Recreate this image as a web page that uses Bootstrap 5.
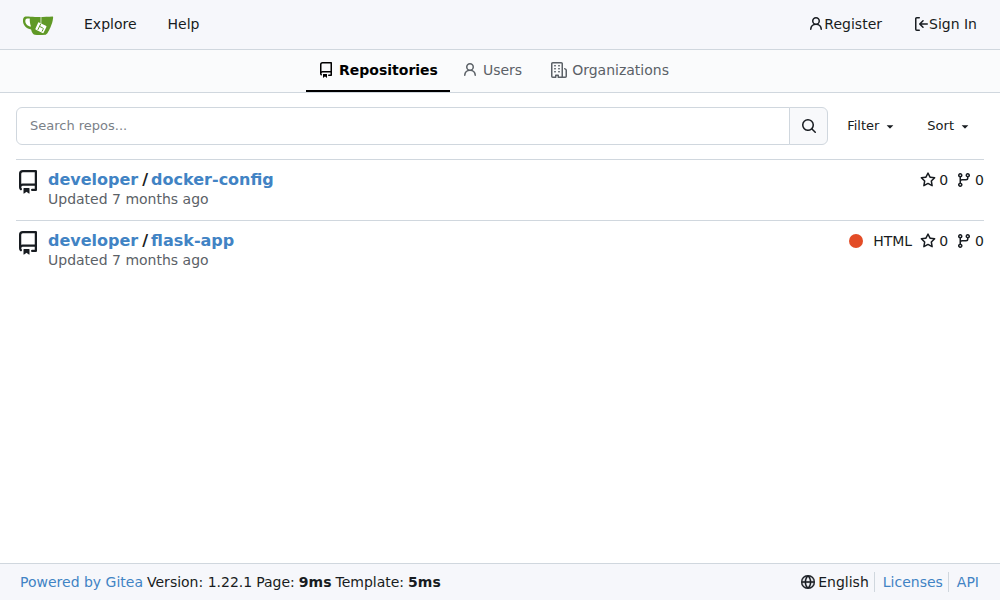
<!DOCTYPE html>
<html lang="en">
<head>
<meta charset="utf-8">
<meta name="viewport" content="width=device-width, initial-scale=1">
<title>Explore - Gitea</title>
<link rel="stylesheet" href="https://cdn.jsdelivr.net/npm/bootstrap@5.3.0/dist/css/bootstrap.min.css">
<style>
:root { --ink: #181c21; --muted: #5b6167; --line: #d0d7de; --link: #4183c4; --bar: #f6f7fb; }
body { font-family: "DejaVu Sans", sans-serif; font-size: 14px; line-height: 20px; color: var(--ink); background: #fff; }
svg { fill: currentColor; flex: none; display: block; }
a { color: var(--link); text-decoration: none; }
.topbar { background: var(--bar); border-bottom: 1px solid var(--line); padding: 0 8px 1px 7px; }
.topbar .nav-link { color: var(--ink); padding: 14px 15px 14px 16px; }
.brand-link { padding: 8px 14px 8px 15px; }
.subnav { background: #fafbfc; border-bottom: 1px solid var(--line); }
.subnav .nav-link { color: var(--muted); padding: 10px 12px; gap: 5px; border-bottom: 2px solid transparent; }
.subnav .nav-link.active { color: #000; font-weight: 700; border-color: #000; }
.subnav .nav-link:last-child { margin: 0 13px 0 5px; }
.content { padding: 14px 16px; }
.search-box .form-control, .search-box .btn { border-color: var(--line); font-size: 13px; line-height: 20px; padding: 8px 13px; box-shadow: none; }
.search-box .form-control::placeholder { color: #7b8188; }
.search-box .btn { background: #f8f9fb; color: var(--ink); padding: 8px 10px 8px 11px; }
.menu-btn { font-size: 13px; line-height: 20px; color: var(--ink); border: 0; padding: 8px 12px; gap: 4px; }
.search-row { gap: 7px; margin-bottom: 14px; }
.menus { gap: 6px; }
.repo-item { border-top: 1px solid var(--line); padding: 10px 0 11px; gap: 8px; }
.repo-head { height: 19px; }
.repo-title { font-size: 16px; line-height: 20px; font-weight: 700; }
.repo-title span { margin: 0 3px 0 4px; }
.updated { color: var(--muted); }
.stats { gap: 8px; }
.stat-link { color: var(--ink); gap: 3px; }
.lang-link { gap: 10px; }
.lang-dot { width: 14px; height: 14px; border-radius: 50%; background: #e34c26; }
.foot { background: var(--bar); border-top: 1px solid var(--line); padding: 8px 21px 8px 20px; }
.foot-info { column-gap: 4px; }
.foot-links > * + * { border-left: 1px solid var(--line); margin-left: 5px; padding-left: 8px; }
.lang-btn { color: var(--ink); gap: 3px; }
</style>
</head>
<body class="d-flex flex-column min-vh-100">
<svg width="0" height="0" class="position-absolute" aria-hidden="true">
  <symbol id="repo" viewBox="0 0 16 16"><path d="M2 2.5A2.5 2.5 0 0 1 4.5 0h8.750a.75.75 0 0 1 .75.75v12.5a.75.75 0 0 1-.75.75h-2.500a.75.75 0 0 1 0-1.500h1.750v-2h-8a1 1 0 0 0-.714 1.700.75.75 0 1 1-1.072 1.050A2.495 2.495 0 0 1 2 11.500Zm10.500-1h-8a1 1 0 0 0-1 1v6.708A2.486 2.486 0 0 1 4.500 9h8ZM5 12.250a.25.25 0 0 1 .25-.25h3.500a.25.25 0 0 1 .25.25v3.250a.25.25 0 0 1-.4.2l-1.450-1.087a.249.249 0 0 0-.3 0L5.400 15.700a.25.25 0 0 1-.4-.2Z"/></symbol>
  <symbol id="person" viewBox="0 0 16 16"><path d="M10.561 8.073a6 6 0 0 1 3.432 5.142.75.75 0 1 1-1.498.07 4.500 4.500 0 0 0-8.990 0 .75.75 0 0 1-1.498-.07 6 6 0 0 1 3.431-5.142 3.999 3.999 0 1 1 5.123 0ZM10.500 5a2.500 2.500 0 1 0-5 0 2.500 2.500 0 0 0 5 0Z"/></symbol>
  <symbol id="signin" viewBox="0 0 16 16"><path d="M2 2.750C2 1.784 2.784 1 3.750 1h2.500a.75.75 0 0 1 0 1.500h-2.500a.25.25 0 0 0-.25.25v10.500c0 .138.112.25.25.25h2.500a.75.75 0 0 1 0 1.500h-2.500A1.750 1.750 0 0 1 2 13.250Zm6.560 4.500h5.690a.75.75 0 0 1 0 1.500H8.560l1.970 1.970a.749.749 0 0 1-.326 1.275.749.749 0 0 1-.734-.215L6.220 8.530a.75.75 0 0 1 0-1.060l3.250-3.250a.749.749 0 0 1 1.275.326.749.749 0 0 1-.215.734Z"/></symbol>
  <symbol id="org" viewBox="0 0 16 16"><path d="M1.750 16A1.750 1.750 0 0 1 0 14.250V1.750C0 .784.784 0 1.750 0h8.500C11.216 0 12 .784 12 1.750v12.500c0 .085-.006.168-.018.25h2.268a.25.25 0 0 0 .25-.25V8.285a.25.25 0 0 0-.111-.208l-1.055-.703a.749.749 0 1 1 .832-1.248l1.055.703c.487.325.779.871.779 1.456v5.965A1.750 1.750 0 0 1 14.250 16h-3.500a.766.766 0 0 1-.197-.026c-.099.017-.2.026-.303.026h-3a.75.75 0 0 1-.75-.75V14h-1v1.250a.75.75 0 0 1-.75.75Zm-.25-1.750c0 .138.112.25.25.25H4v-1.250a.75.75 0 0 1 .75-.75h2.500a.75.75 0 0 1 .75.75v1.250h2.250a.25.25 0 0 0 .25-.25V1.750a.25.25 0 0 0-.25-.25h-8.500a.25.25 0 0 0-.25.25ZM3.750 6h.5a.75.75 0 0 1 0 1.500h-.5a.75.75 0 0 1 0-1.500ZM3 3.750A.75.75 0 0 1 3.750 3h.5a.75.75 0 0 1 0 1.500h-.5A.75.75 0 0 1 3 3.750Zm4 3A.75.75 0 0 1 7.750 6h.5a.75.75 0 0 1 0 1.500h-.5A.75.75 0 0 1 7 6.750ZM7.750 3h.5a.75.75 0 0 1 0 1.500h-.5a.75.75 0 0 1 0-1.500ZM3 9.750A.75.75 0 0 1 3.750 9h.5a.75.75 0 0 1 0 1.500h-.5A.75.75 0 0 1 3 9.750ZM7.750 9h.5a.75.75 0 0 1 0 1.500h-.5a.75.75 0 0 1 0-1.500Z"/></symbol>
  <symbol id="search" viewBox="0 0 16 16"><path d="M10.680 11.740a6 6 0 0 1-7.922-8.982 6 6 0 0 1 8.982 7.922l3.040 3.040a.749.749 0 0 1-.326 1.275.749.749 0 0 1-.734-.215ZM11.500 7a4.499 4.499 0 1 0-8.997 0A4.499 4.499 0 0 0 11.500 7Z"/></symbol>
  <symbol id="down" viewBox="0 0 16 16"><path d="m4.427 7.427 3.396 3.396a.25.25 0 0 0 .354 0l3.396-3.396A.25.25 0 0 0 11.396 7H4.604a.25.25 0 0 0-.177.427Z"/></symbol>
  <symbol id="star" viewBox="0 0 16 16"><path d="M8 .25a.75.75 0 0 1 .673.418l1.882 3.815 4.210.612a.75.75 0 0 1 .416 1.279l-3.046 2.970.719 4.192a.751.751 0 0 1-1.088.791L8 12.347l-3.766 1.980a.75.75 0 0 1-1.088-.79l.72-4.194L.818 6.374a.75.75 0 0 1 .416-1.280l4.210-.611L7.327.668A.75.75 0 0 1 8 .25Zm0 2.445L6.615 5.500a.75.75 0 0 1-.564.41l-3.097.45 2.240 2.184a.75.75 0 0 1 .216.664l-.528 3.084 2.769-1.456a.75.75 0 0 1 .698 0l2.770 1.456-.53-3.084a.75.75 0 0 1 .216-.664l2.240-2.183-3.096-.45a.75.75 0 0 1-.564-.41L8 2.694Z"/></symbol>
  <symbol id="branch" viewBox="0 0 16 16"><path d="M9.500 3.250a2.250 2.250 0 1 1 3 2.122V6A2.500 2.500 0 0 1 10 8.500H6a1 1 0 0 0-1 1v1.128a2.251 2.251 0 1 1-1.500 0V5.372a2.250 2.250 0 1 1 1.500 0v1.836A2.493 2.493 0 0 1 6 7h4a1 1 0 0 0 1-1v-.628A2.250 2.250 0 0 1 9.500 3.250Zm-6 0a.75.75 0 1 0 1.500 0 .75.75 0 0 0-1.500 0Zm8.250-.75a.75.75 0 1 0 0 1.500.75.75 0 0 0 0-1.500ZM4.250 12a.75.75 0 1 0 0 1.500.75.75 0 0 0 0-1.500Z"/></symbol>
  <symbol id="globe" viewBox="0 0 16 16"><path stroke="currentColor" stroke-width=".3" d="M8 0a8 8 0 1 1 0 16A8 8 0 0 1 8 0ZM5.780 8.750a9.640 9.640 0 0 0 1.363 4.177c.255.426.542.832.857 1.215.245-.296.551-.705.857-1.215A9.640 9.640 0 0 0 10.220 8.750Zm4.440-1.500a9.640 9.640 0 0 0-1.363-4.177c-.307-.51-.612-.919-.857-1.215a9.927 9.927 0 0 0-.857 1.215A9.640 9.640 0 0 0 5.780 7.250Zm-5.944 1.500H1.543a6.507 6.507 0 0 0 4.666 5.500c-.123-.181-.24-.365-.352-.552-.715-1.192-1.437-2.874-1.581-4.948Zm-2.733-1.500h2.733c.144-2.074.866-3.756 1.580-4.948.12-.197.237-.381.353-.552a6.507 6.507 0 0 0-4.666 5.500Zm10.181 1.500c-.144 2.074-.866 3.756-1.580 4.948-.12.197-.237.381-.353.552a6.507 6.507 0 0 0 4.666-5.500Zm2.733-1.500a6.507 6.507 0 0 0-4.666-5.500c.123.181.24.365.353.552.714 1.192 1.436 2.874 1.580 4.948Z"/></symbol>
</svg>

<nav class="topbar d-flex align-items-center justify-content-between" aria-label="Main">
  <div class="d-flex align-items-center">
    <a class="brand-link" href="#" aria-label="Home">
      <svg width="32" height="30" viewBox="0 -1 32 30">
        <path fill="#609926" d="M3.500 6.600C6 6.400 9 6.900 13 7c6 .1 12.500 0 17.500-.4.900-.1.600 1.200.5 2-.3 3.200-1.200 5.800-2.600 8.800-1.700 3.600-3.300 7.100-5.200 7.400-3.600.4-8 .4-10.500 0-1.700-.4-3-2.800-3.600-5.400C4.600 18.900 1.300 15.600 1 11.600.8 8.800 1.600 6.800 3.500 6.600Z"/>
        <path fill="#fff" d="M4.500 8.700c1.200-.3 2.200-.2 3.300-.1-.2 2.900.2 5.300 1.200 8-3.100-.3-5.600-2.600-5.700-5.400 0-1.200.3-2.200 1.200-2.500ZM17 12.400l6.900 3.300c.6.300.7.700.5 1.200l-2.700 5.700c-.3.500-.7.700-1.200.4l-6.600-3.200c-.5-.3-.7-.7-.4-1.200l2.500-5.700c.2-.5.500-.7 1-.5Z"/>
        <path fill="none" stroke="#fff" stroke-width=".7" d="m19 7-.1 7"/>
        <path fill="none" stroke="#609926" stroke-width="1" d="m18.800 13.700-3 6.200m1.700-3.500 3 1.400c.9.400 1 .7.600 1.500l-1.100 2.200"/>
      </svg>
    </a>
    <a class="nav-link" href="#">Explore</a>
    <a class="nav-link" href="#">Help</a>
  </div>
  <div class="d-flex align-items-center">
    <a class="nav-link d-flex align-items-center" href="#"><svg width="16" height="16"><use href="#person"/></svg>Register</a>
    <a class="nav-link d-flex align-items-center" href="#"><svg width="16" height="16"><use href="#signin"/></svg>Sign In</a>
  </div>
</nav>

<nav class="subnav d-flex justify-content-center" aria-label="Explore">
  <a class="nav-link active d-flex align-items-center" aria-current="page" href="#"><svg width="16" height="16"><use href="#repo"/></svg>Repositories</a>
  <a class="nav-link d-flex align-items-center" href="#"><svg width="16" height="16"><use href="#person"/></svg>Users</a>
  <a class="nav-link d-flex align-items-center" href="#"><svg width="16" height="16"><use href="#org"/></svg>Organizations</a>
</nav>

<main class="content flex-grow-1">
  <form class="search-row d-flex align-items-center">
    <div class="search-box input-group flex-grow-1 w-auto">
      <input type="search" class="form-control" placeholder="Search repos..." aria-label="Search repos...">
      <button type="button" class="btn" aria-label="Search"><svg width="16" height="16"><use href="#search"/></svg></button>
    </div>
    <div class="menus d-flex">
      <button type="button" class="btn menu-btn d-flex align-items-center">Filter <svg width="14" height="14"><use href="#down"/></svg></button>
      <button type="button" class="btn menu-btn d-flex align-items-center">Sort <svg width="14" height="14"><use href="#down"/></svg></button>
    </div>
  </form>

  <div class="repo-list">
    <article class="repo-item d-flex align-items-start">
      <svg width="24" height="24"><use href="#repo"/></svg>
      <div class="flex-grow-1">
        <div class="repo-head d-flex align-items-center justify-content-between">
          <div class="repo-title d-flex"><a href="#">developer</a><span>/</span><a href="#">docker-config</a></div>
          <div class="stats d-flex align-items-center">
            <a class="stat-link d-flex align-items-center" href="#"><svg width="16" height="16"><use href="#star"/></svg>0</a>
            <a class="stat-link d-flex align-items-center" href="#"><svg width="16" height="16"><use href="#branch"/></svg>0</a>
          </div>
        </div>
        <div class="updated">Updated 7 months ago</div>
      </div>
    </article>
    <article class="repo-item d-flex align-items-start">
      <svg width="24" height="24"><use href="#repo"/></svg>
      <div class="flex-grow-1">
        <div class="repo-head d-flex align-items-center justify-content-between">
          <div class="repo-title d-flex"><a href="#">developer</a><span>/</span><a href="#">flask-app</a></div>
          <div class="stats d-flex align-items-center">
            <a class="stat-link lang-link d-flex align-items-center" href="#"><span class="lang-dot"></span>HTML</a>
            <a class="stat-link d-flex align-items-center" href="#"><svg width="16" height="16"><use href="#star"/></svg>0</a>
            <a class="stat-link d-flex align-items-center" href="#"><svg width="16" height="16"><use href="#branch"/></svg>0</a>
          </div>
        </div>
        <div class="updated">Updated 7 months ago</div>
      </div>
    </article>
  </div>
</main>

<footer class="foot d-flex flex-wrap justify-content-between">
  <div class="foot-info d-flex flex-wrap"><a href="#">Powered by Gitea</a><span>Version: 1.22.1</span><span>Page:</span><strong>9ms</strong><span>Template:</span><strong>5ms</strong></div>
  <div class="foot-links d-flex">
    <button type="button" class="lang-btn bg-transparent border-0 p-0 d-flex align-items-center"><svg width="14" height="14"><use href="#globe"/></svg>English</button>
    <a href="#">Licenses</a>
    <a href="#">API</a>
  </div>
</footer>
<script src="https://cdn.jsdelivr.net/npm/bootstrap@5.3.0/dist/js/bootstrap.bundle.min.js"></script>
</body>
</html>
